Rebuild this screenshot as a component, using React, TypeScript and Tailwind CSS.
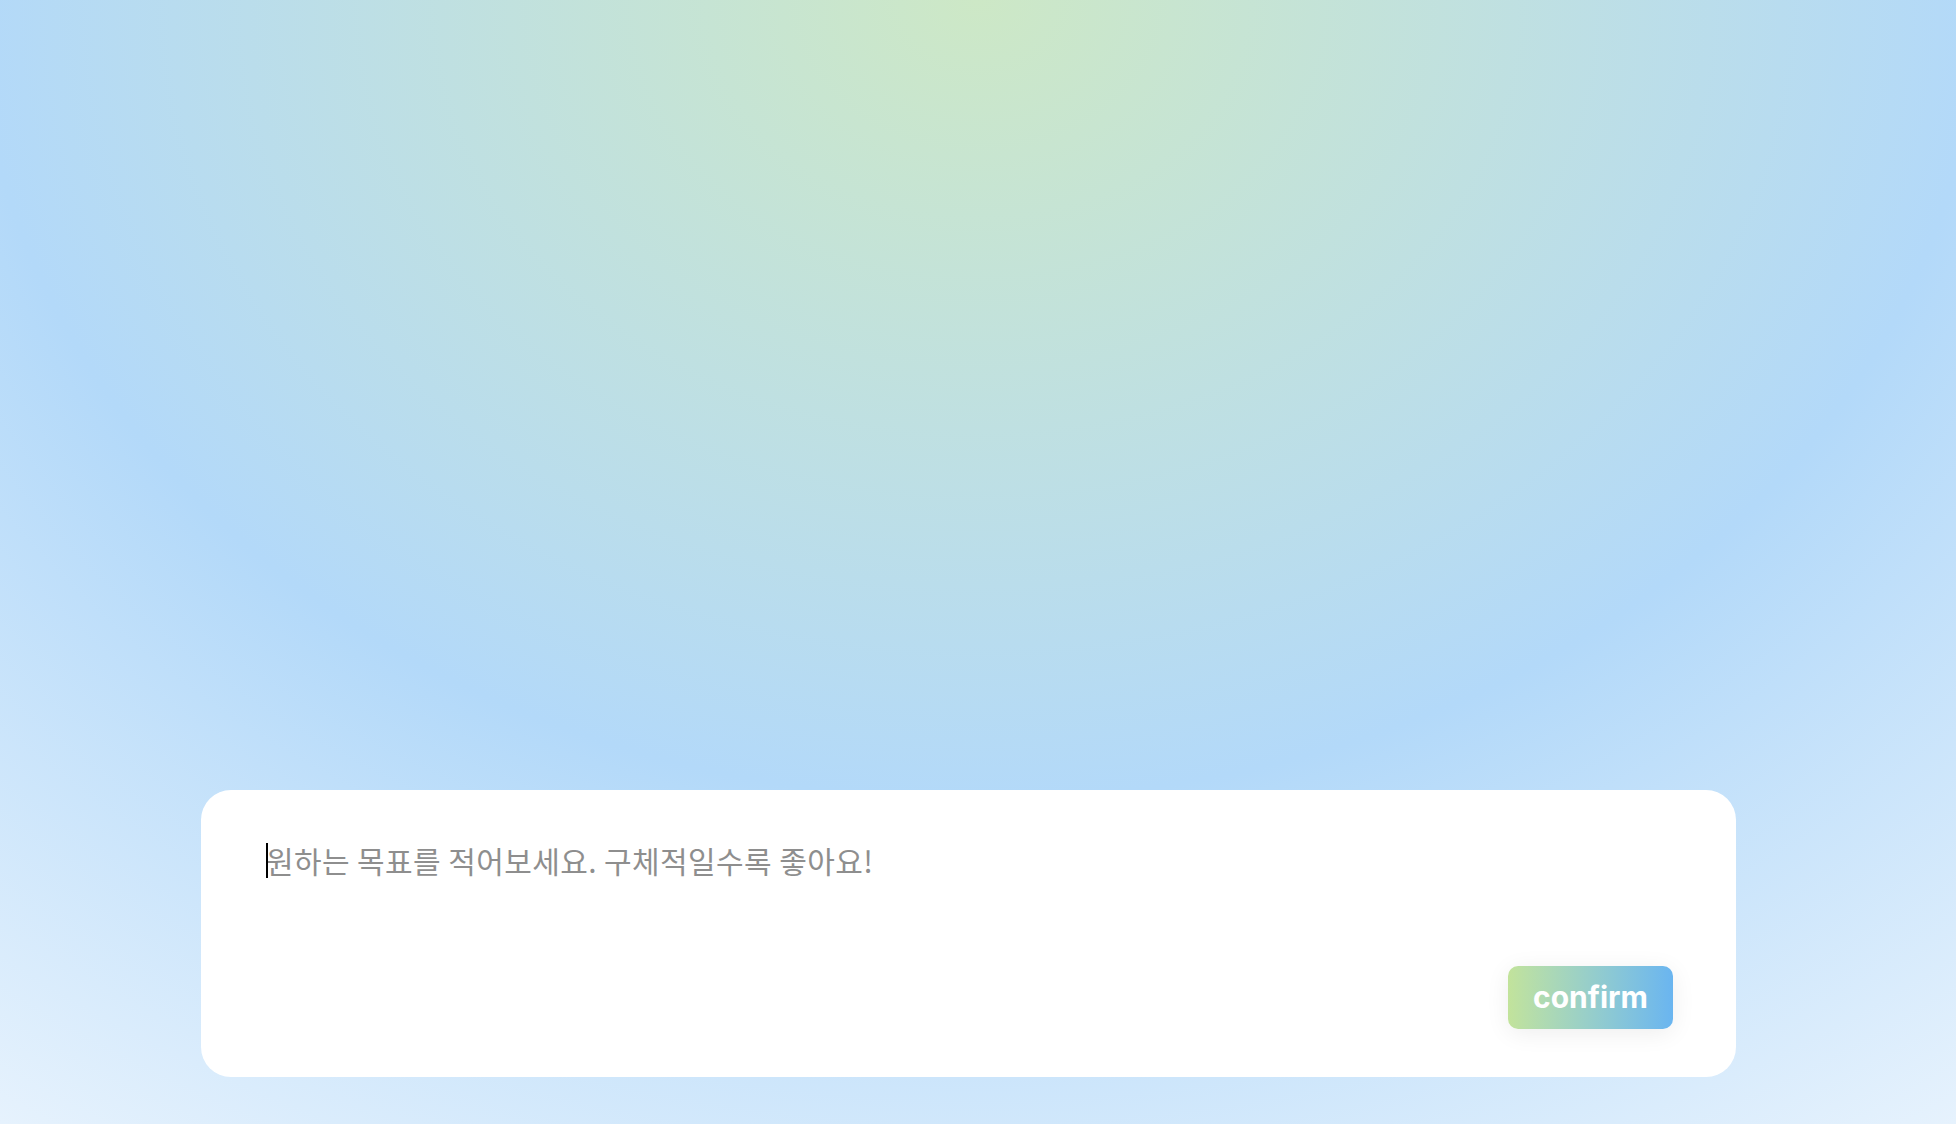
import React, { useState } from 'react'

// goal input screen: soft radial backdrop with a white prompt card near the bottom
export default function App() {
  const [goal, setGoal] = useState<string>("")

  return (
    <div className="flex h-screen w-full flex-col justify-end bg-[radial-gradient(ellipse_1000px_800px_at_50%_0%,#cde8c6_0%,#b3d9f9_100%,#e6f2fd_171%)] pb-[47px] pl-[201px]">
      <div className="flex h-[287px] w-[1535px] flex-col rounded-[30px] bg-white pt-[48px] pl-[65px] pr-[63px] pb-[48px]">
        <div className="relative">
          {/* blinking caret stand-in, only while empty */}
          {goal === "" && <span className="pointer-events-none absolute left-0 top-[5px] h-[35px] w-[2px] bg-black" />}
          <textarea
            autoFocus
            value={goal}
            onChange={(e) => setGoal(e.target.value)}
            placeholder="원하는 목표를 적어보세요. 구체적일수록 좋아요!"
            className="h-[60px] w-full resize-none bg-transparent p-0 text-[30px] leading-[44px] tracking-[0.4px] text-[#333] caret-black outline-none placeholder:text-[#8e8e8e]"
            style={{ fontFamily: '"Noto Sans CJK KR", "Noto Sans", sans-serif' }}
          />
        </div>
        <div className="mt-auto flex justify-end">
          {/* gradient confirm button */}
          <button
            type="button"
            className="flex h-[63px] w-[165px] items-center justify-center rounded-[10px] bg-gradient-to-r from-[#c2e39b] to-[#6ab5f0] text-[30px] font-bold text-white shadow-[0_4px_24px_rgba(0,0,0,0.07)]"
            style={{ fontFamily: 'Inter, "Noto Sans", sans-serif' }}
          >
            confirm
          </button>
        </div>
      </div>
    </div>
  )
}
